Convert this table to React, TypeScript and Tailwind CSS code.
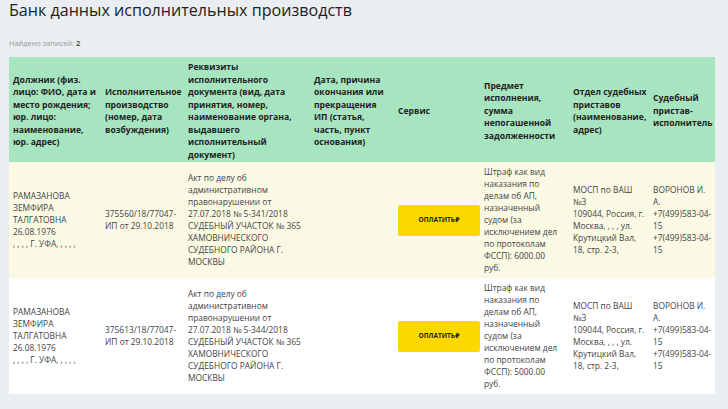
import { ReactNode } from 'react'

type Row = {
  debtor: string[]
  proceeding: string
  document: string
  subject: string
  department: string[]
  bailiff: string[]
}

const rows: Row[] = [
  {
    debtor: ['РАМАЗАНОВА ЗЕМФИРА ТАЛГАТОВНА', '26.08.1976', ', , , , Г. УФА, , , , ,'],
    proceeding: '375560/18/77047-ИП от 29.10.2018',
    document:
      'Акт по делу об административном правонарушении от 27.07.2018 № 5-341/2018 СУДЕБНЫЙ УЧАСТОК № 365 ХАМОВНИЧЕСКОГО СУДЕБНОГО РАЙОНА Г. МОСКВЫ',
    subject:
      'Штраф как вид наказания по делам об АП, назначенный судом (за исключением дел по протоколам ФССП): 6000.00 руб.',
    department: ['МОСП по ВАШ', '№3', '109044, Россия, г. Москва, , , , ул. Крутицкий Вал, 18, стр. 2-3,'],
    bailiff: ['ВОРОНОВ И.', 'А.', '+7(499)583-04-15', '+7(499)583-04-15'],
  },
  {
    debtor: ['РАМАЗАНОВА ЗЕМФИРА ТАЛГАТОВНА', '26.08.1976', ', , , , Г. УФА, , , , ,'],
    proceeding: '375613/18/77047-ИП от 29.10.2018',
    document:
      'Акт по делу об административном правонарушении от 27.07.2018 № 5-344/2018 СУДЕБНЫЙ УЧАСТОК № 365 ХАМОВНИЧЕСКОГО СУДЕБНОГО РАЙОНА Г. МОСКВЫ',
    subject:
      'Штраф как вид наказания по делам об АП, назначенный судом (за исключением дел по протоколам ФССП): 5000.00 руб.',
    department: ['МОСП по ВАШ', '№3', '109044, Россия, г. Москва, , , , ул. Крутицкий Вал, 18, стр. 2-3,'],
    bailiff: ['ВОРОНОВ И.', 'А.', '+7(499)583-04-15', '+7(499)583-04-15'],
  },
]

// widths include padding; extra right padding only where the reference wraps tighter
const columns: { title: string; cls: string }[] = [
  { title: 'Должник (физ. лицо: ФИО, дата и место рождения; юр. лицо: наименование, юр. адрес)', cls: 'w-[92px] pr-0' },
  { title: 'Исполнительное производство (номер, дата возбуждения)', cls: 'w-[83px] pr-1' },
  {
    title:
      'Реквизиты исполнительного документа (вид, дата принятия, номер, наименование органа, выдавшего исполнительный документ)',
    cls: 'w-[126px] pr-0',
  },
  { title: 'Дата, причина окончания или прекращения ИП (статья, часть, пункт основания)', cls: 'w-[84px] pr-1' },
  { title: 'Сервис', cls: 'w-[86px] pr-0' },
  { title: 'Предмет исполнения, сумма непогашенной задолженности', cls: 'w-[89px] pr-1' },
  { title: 'Отдел судебных приставов (наименование, адрес)', cls: 'w-[80px] pr-0' },
  { title: 'Судебный пристав-исполнитель', cls: 'w-[66px] pr-0' },
]

function Cell({ children, pad = 'pr-0' }: { children?: ReactNode; pad?: string }) {
  return <td className={`py-1 pl-1 align-middle break-words ${pad}`}>{children}</td>
}

function Lines({ items }: { items: string[] }) {
  return (
    <>
      {items.map((t, i) => (
        <div key={i}>{t}</div>
      ))}
    </>
  )
}

function PayButton() {
  return (
    <button className="flex h-[31px] w-[82px] items-center justify-center rounded-[2px] bg-[#fdd700] text-[6.5px] font-bold text-[#222]">
      ОПЛАТИТЬ<span className="font-['DejaVu_Sans',sans-serif]">₽</span>
    </button>
  )
}

export default function App() {
  return (
    <div className="min-h-[409px] bg-[#e9eef0] px-[9px] font-['Open_Sans',sans-serif] text-[#444]">
      <h1 className="text-[16.1px] leading-[21px] text-[#222]">Банк данных исполнительных производств</h1>
      <p className="mt-[17px] text-[7.4px] leading-[10px] text-[#999]">
        Найдено записей: <span className="font-bold text-[#555]">2</span>
      </p>

      <table className="mt-[9px] w-[706px] table-fixed border-collapse text-left">
        <thead>
          <tr className="bg-[#a7e5c1] text-[8.6px] leading-[12.5px] font-bold text-[#222]">
            {columns.map((c) => (
              <th key={c.title} className={`${c.cls} pt-[4px] pb-[1px] pl-1 align-middle font-bold`}>
                {c.title}
              </th>
            ))}
          </tr>
        </thead>
        <tbody className="text-[8.4px] leading-[12px]">
          {rows.map((r, i) => (
            <tr key={r.proceeding} className={i === 0 ? 'h-[116px] bg-[#faf9e4]' : 'h-[116px] bg-white'}>
              <Cell>
                <Lines items={r.debtor} />
              </Cell>
              <Cell pad="pr-1">{r.proceeding}</Cell>
              <Cell>{r.document}</Cell>
              <Cell pad="pr-1" />
              <Cell>
                <PayButton />
              </Cell>
              <Cell pad="pr-[6px]">{r.subject}</Cell>
              <Cell>
                <Lines items={r.department} />
              </Cell>
              <Cell>
                <Lines items={r.bailiff} />
              </Cell>
            </tr>
          ))}
        </tbody>
      </table>
    </div>
  )
}
